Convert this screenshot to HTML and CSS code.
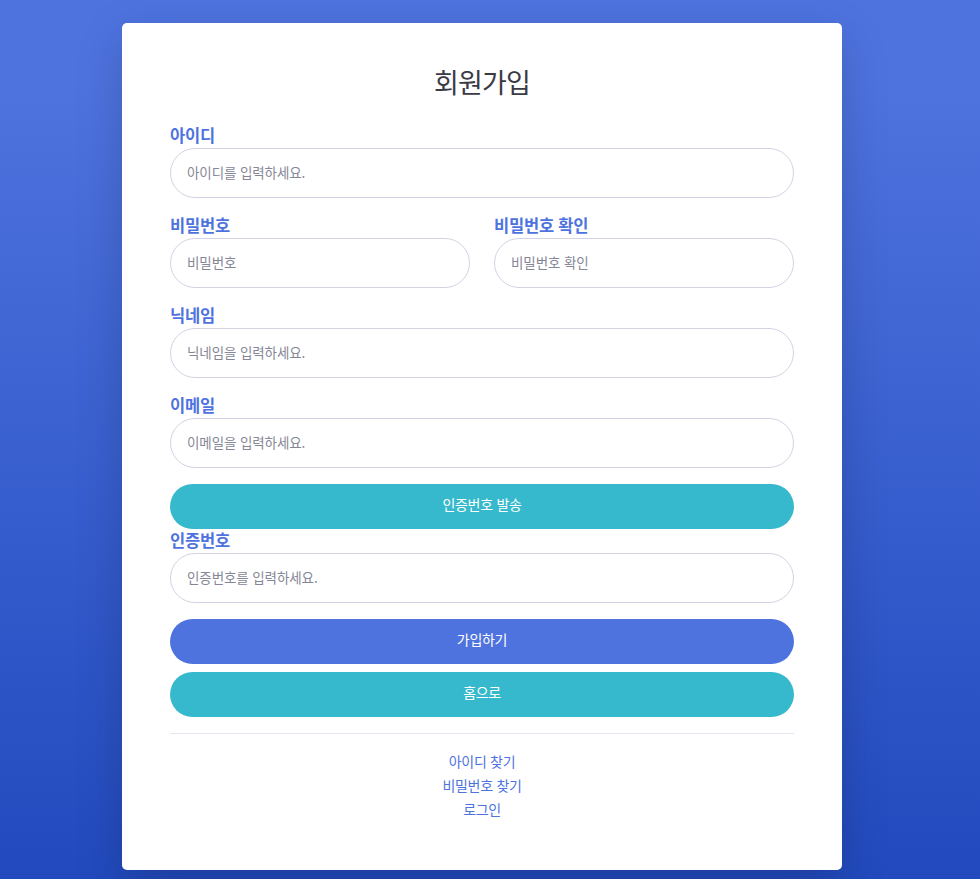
FILE: index.html
```html
<!DOCTYPE html>
<html lang="ko">
<head>
<meta charset="utf-8">
<title>회원가입</title>
<link rel="stylesheet" href="styles.css">
</head>
<body>
<div class="page">
  <div class="card">
    <h1 class="title">회원가입</h1>
    <form class="form">
      <div class="group">
        <label class="label">아이디</label>
        <input class="input" type="text" placeholder="아이디를 입력하세요.">
      </div>
      <div class="group row">
        <div class="col">
          <label class="label">비밀번호</label>
          <input class="input" type="password" placeholder="비밀번호">
        </div>
        <div class="col">
          <label class="label">비밀번호 확인</label>
          <input class="input" type="password" placeholder="비밀번호 확인">
        </div>
      </div>
      <div class="group">
        <label class="label">닉네임</label>
        <input class="input" type="text" placeholder="닉네임을 입력하세요.">
      </div>
      <div class="group">
        <label class="label">이메일</label>
        <input class="input" type="text" placeholder="이메일을 입력하세요.">
      </div>
      <button type="button" class="btn btn-info">인증번호 발송</button>
      <div class="group">
        <label class="label">인증번호</label>
        <input class="input" type="text" placeholder="인증번호를 입력하세요.">
      </div>
      <button type="button" class="btn btn-primary">가입하기</button>
      <button type="button" class="btn btn-info btn-gap">홈으로</button>
    </form>
    <hr class="divider">
    <div class="links">
      <a class="link" href="#">아이디 찾기</a>
      <a class="link" href="#">비밀번호 찾기</a>
      <a class="link" href="#">로그인</a>
    </div>
  </div>
</div>
</body>
</html>
```
FILE: styles.css
```css
* { box-sizing: border-box; }
html, body { height: 100%; }
body {
  margin: 0;
  font-family: "Noto Sans CJK KR", "Noto Sans", sans-serif;
  background: linear-gradient(180deg, #4e73df 10%, #224abe 100%);
  min-height: 879px;
}
.page {
  padding: 23px 0 0 122px;
}
.card {
  width: 720px;
  height: 847px;
  background: #fff;
  border-radius: 5px;
  box-shadow: 0 16px 48px rgba(0, 0, 0, 0.175);
  padding: 38px 48px 0;
}
.title {
  margin: 0 0 21px;
  text-align: center;
  font-size: 27px;
  font-weight: 400;
  line-height: 42px;
  color: #3a3b45;
  letter-spacing: -0.8px;
}
.form { display: flex; flex-direction: column; }
.group { margin-bottom: 16px; }
.row { display: flex; gap: 24px; }
.col { flex: 1; }
.label {
  display: block;
  font-size: 16.5px;
  font-weight: 700;
  line-height: 22px;
  padding-bottom: 2px;
  color: #4e73df;
  letter-spacing: -0.2px;
}
.input {
  display: block;
  width: 100%;
  height: 50px;
  border: 1px solid #d1d3e2;
  border-radius: 160px;
  padding: 0 16px 3px;
  font-family: inherit;
  font-size: 13.5px;
  letter-spacing: -0.1px;
  color: #6e707e;
  background: #fff;
  outline: none;
}
.input::placeholder { color: #858796; opacity: 1; }
.btn {
  display: block;
  width: 100%;
  height: 45px;
  border: none;
  border-radius: 160px;
  padding: 0 16px 5px;
  font-family: inherit;
  font-size: 14px;
  letter-spacing: -0.3px;
  color: #fff;
  cursor: pointer;
}
.btn-info { background: #36b9cc; }
.btn-primary { background: #4e73df; }
.btn-gap { margin-top: 8px; }
.divider {
  margin: 16px 0 0;
  border: 0;
  border-top: 1px solid #e3e6f0;
}
.links {
  display: flex;
  flex-direction: column;
  align-items: center;
  padding-top: 15px;
}
.link {
  font-size: 14px;
  line-height: 24px;
  color: #4e73df;
  text-decoration: none;
  letter-spacing: -0.3px;
}
```
